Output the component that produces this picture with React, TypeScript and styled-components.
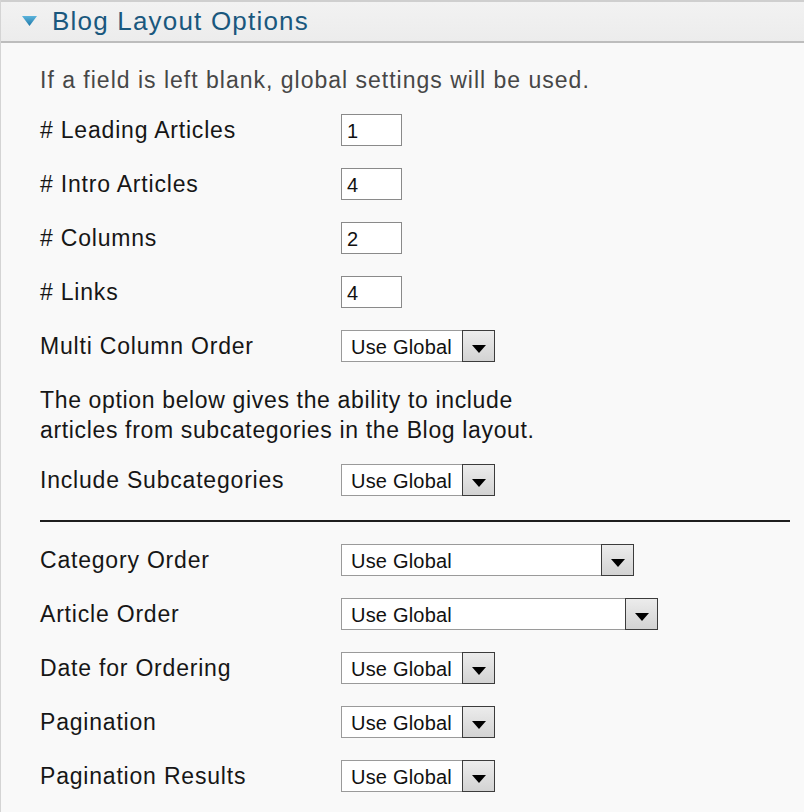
import React from "react";
import styled, { createGlobalStyle } from "styled-components";

const GlobalStyle = createGlobalStyle`
  html, body {
    margin: 0;
    padding: 0;
    background: #f9f9f9;
  }
  body {
    font-family: "Liberation Sans", Arial, sans-serif;
  }
`;

const Panel = styled.div`
  width: 804px;
  height: 812px;
  box-sizing: border-box;
  border-left: 1px solid #d4d4d4;
  background: #f9f9f9;
  overflow: hidden;
`;

const Header = styled.div`
  display: flex;
  align-items: center;
  gap: 15px;
  height: 39px;
  padding-left: 21px;
  background: linear-gradient(#f2f2f2, #ececec);
  border-top: 2px solid #cfcfcf;
  border-bottom: 2px solid #bdbdbd;
`;

const Title = styled.h2`
  margin: 0;
  font-size: 26px;
  font-weight: normal;
  letter-spacing: 1.2px;
  color: #1a587e;
`;

const Body = styled.div`
  display: flex;
  flex-direction: column;
  padding: 22px 14px 0 39px;
`;

const Note = styled.p`
  margin: 0;
  font-size: 23px;
  line-height: 30px;
  letter-spacing: 1px;
  color: #474747;
`;

const Info = styled.p`
  margin: 12px 0 8px;
  font-size: 23px;
  line-height: 30px;
  letter-spacing: 0.65px;
  color: #161616;
`;

const Rows = styled.div<{ $top?: number }>`
  display: flex;
  flex-direction: column;
  margin-top: ${(p) => p.$top ?? 0}px;
`;

const Row = styled.div`
  display: flex;
  align-items: center;
  height: 54px;
`;

const Label = styled.span`
  width: 301px;
  flex: none;
  font-size: 23px;
  letter-spacing: 0.8px;
  color: #161616;
`;

const NumberBox = styled.div`
  width: 61px;
  height: 32px;
  box-sizing: border-box;
  border: 1px solid #8a8a8a;
  background: #fff;
  display: flex;
  align-items: center;
  padding: 2px 0 0 5px;
  font-size: 20px;
  color: #111;
`;

const SelectBox = styled.div<{ $width: number }>`
  width: ${(p) => p.$width}px;
  height: 32px;
  box-sizing: border-box;
  display: flex;
  border: 1px solid #9a9a9a;
  border-right: none;
  background: #fff;
`;

const SelectText = styled.span`
  flex: 1;
  display: flex;
  align-items: center;
  padding: 3px 0 0 9px;
  font-size: 20px;
  letter-spacing: 0.2px;
  color: #111;
`;

const SelectButton = styled.div`
  width: 33px;
  margin: -1px 0;
  box-sizing: border-box;
  border: 1px solid #3c3c3c;
  background: linear-gradient(#ececec, #d3d3d3);
  display: flex;
  align-items: flex-end;
  justify-content: center;
  padding-bottom: 8px;
`;

const Arrow = styled.span`
  width: 0;
  height: 0;
  border-left: 7px solid transparent;
  border-right: 7px solid transparent;
  border-top: 8px solid #000;
`;

const Rule = styled.hr`
  margin: 13px 0 0;
  border: none;
  height: 2px;
  background: #1e1e1e;
`;

const HeadTriangle = () => (
  <svg width="15" height="11" viewBox="0 0 15 11">
    <defs>
      <linearGradient id="tri" x1="0" y1="0" x2="0" y2="1">
        <stop offset="0" stopColor="#5cb4dc" />
        <stop offset="1" stopColor="#1e78a8" />
      </linearGradient>
    </defs>
    <polygon points="0,0 15,0 7.5,10" fill="url(#tri)" />
  </svg>
);

const Select = ({ width = 154 }: { width?: number }) => (
  <SelectBox $width={width}>
    <SelectText>Use Global</SelectText>
    <SelectButton>
      <Arrow />
    </SelectButton>
  </SelectBox>
);

const numbers = [
  { label: "# Leading Articles", value: "1" },
  { label: "# Intro Articles", value: "4" },
  { label: "# Columns", value: "2" },
  { label: "# Links", value: "4" },
];

const orderRows = [
  { label: "Category Order", width: 293 },
  { label: "Article Order", width: 317 },
  { label: "Date for Ordering", width: 154 },
  { label: "Pagination", width: 154 },
  { label: "Pagination Results", width: 154 },
];

export default function App() {
  return (
    <Panel>
      <GlobalStyle />
      <Header>
        <HeadTriangle />
        <Title>Blog Layout Options</Title>
      </Header>
      <Body>
        <Note>If a field is left blank, global settings will be used.</Note>
        <Rows $top={8}>
          {numbers.map((n) => (
            <Row key={n.label}>
              <Label>{n.label}</Label>
              <NumberBox>{n.value}</NumberBox>
            </Row>
          ))}
          <Row>
            <Label>Multi Column Order</Label>
            <Select />
          </Row>
        </Rows>
        <Info>
          The option below gives the ability to include
          <br />
          articles from subcategories in the Blog layout.
        </Info>
        <Row>
          <Label>Include Subcategories</Label>
          <Select />
        </Row>
        <Rule />
        <Rows $top={11}>
          {orderRows.map((r) => (
            <Row key={r.label}>
              <Label>{r.label}</Label>
              <Select width={r.width} />
            </Row>
          ))}
        </Rows>
      </Body>
    </Panel>
  );
}
